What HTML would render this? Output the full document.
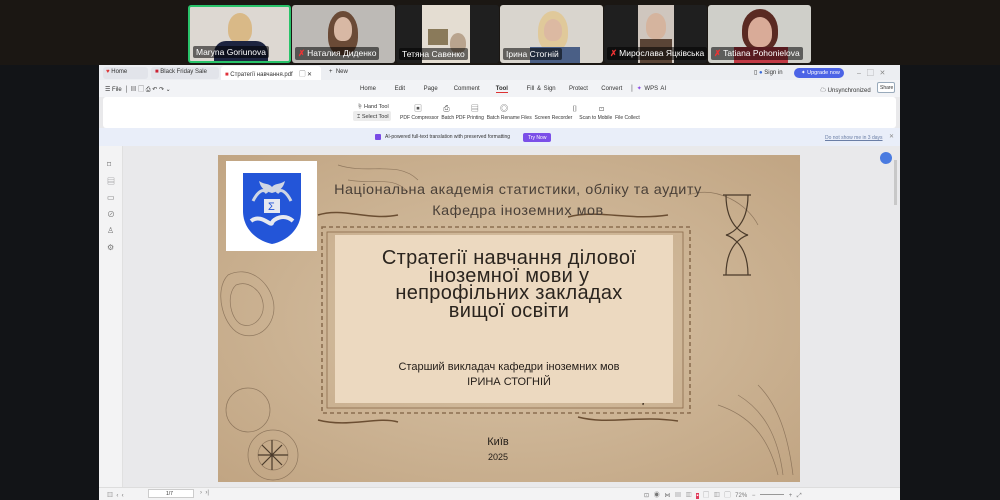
<!DOCTYPE html>
<html><head><meta charset="utf-8"><style>
*{margin:0;padding:0;box-sizing:border-box}
body{width:1000px;height:500px;overflow:hidden;background:#121417;font-family:"Liberation Sans","Noto Sans CJK SC",sans-serif;position:relative}
.top{position:absolute;left:0;top:0;width:1000px;height:65px;background:#1b1713}
.tile{position:absolute;top:5px;height:58px;width:103px;background:#2a2a2a;overflow:hidden;border-radius:3px}
.tile .lbl{position:absolute;left:3px;bottom:3px;background:rgba(0,0,0,.55);color:#fff;font-size:8.5px;padding:1px 3px;border-radius:2px;white-space:nowrap}
.mic{color:#e33;font-weight:bold;margin-right:2px}
.face{position:absolute;border-radius:50% 50% 40% 40%}
.win{position:absolute;left:99px;top:65px;width:801px;height:435px;background:#e9e9eb}
.abs{position:absolute}
.t{font-size:6px;color:#333;white-space:nowrap}
.slide{position:absolute;left:218px;top:155px;width:582px;height:327px;background:#cdb597;overflow:hidden}
.hd{font-family:"Liberation Sans",sans-serif;color:#4a4038;font-size:14px;letter-spacing:.5px;font-weight:300;transform:scaleX(1.03)}
</style></head><body>
<div class="top"></div>
<div class="tile" style="left:188px;background:#ddd8d2;border:2px solid #29c36a">
 <div class="face" style="left:38px;top:6px;width:24px;height:30px;background:#d9b987"></div>
 <div class="abs" style="left:24px;top:34px;width:54px;height:30px;background:#1d2440;border-radius:12px 12px 0 0"></div>
 <div class="lbl">Maryna Goriunova</div></div>
<div class="tile" style="left:292px;background:#bdbab6">
 <div class="face" style="left:36px;top:6px;width:30px;height:44px;background:#6a4a36"></div>
 <div class="face" style="left:42px;top:12px;width:18px;height:24px;background:#d8b8a4"></div>
 <div class="lbl"><span class="mic">✗</span>Наталия Диденко</div></div>
<div class="tile" style="left:396px;background:#1f1f1f">
 <div class="abs" style="left:26px;top:0;width:48px;height:58px;background:#e4ddd2"></div>
 <div class="abs" style="left:32px;top:24px;width:20px;height:16px;background:#8a7a5a"></div>
 <div class="face" style="left:54px;top:28px;width:16px;height:20px;background:#b9a48e"></div>
 <div class="lbl">Тетяна Савенко</div></div>
<div class="tile" style="left:500px;background:#d9d5ce">
 <div class="face" style="left:38px;top:6px;width:30px;height:40px;background:#e0c99a"></div>
 <div class="face" style="left:44px;top:14px;width:18px;height:22px;background:#dcb9a2"></div>
 <div class="abs" style="left:30px;top:42px;width:50px;height:20px;background:#4a5f86"></div>
 <div class="lbl">Ірина Стогній</div></div>
<div class="tile" style="left:604px;background:#1f1f1f">
 <div class="abs" style="left:34px;top:0;width:36px;height:58px;background:#cfc6be"></div>
 <div class="face" style="left:42px;top:8px;width:20px;height:26px;background:#d5b49e"></div>
 <div class="abs" style="left:36px;top:34px;width:32px;height:24px;background:#5a4436"></div>
 <div class="lbl"><span class="mic">✗</span>Мирослава Яцківська</div></div>
<div class="tile" style="left:708px;background:#cfcfc9">
 <div class="face" style="left:34px;top:4px;width:36px;height:42px;background:#5a2a22"></div>
 <div class="face" style="left:40px;top:12px;width:24px;height:30px;background:#d9ab98"></div>
 <div class="abs" style="left:26px;top:42px;width:54px;height:20px;background:#c23a45"></div>
 <div class="lbl"><span class="mic">✗</span>Tatiana Pohonielova</div></div>

<div class="win">
 <div class="abs" style="left:0;top:0;width:801px;height:15px;background:#eceef2"></div>
 <div class="abs" style="left:4px;top:2px;width:45px;height:12px;background:#e2e4ea;border-radius:3px"></div>
 <div class="abs t" style="left:7px;top:4px"><span style="color:#d33">♥</span> Home</div>
 <div class="abs" style="left:52px;top:2px;width:68px;height:12px;background:#e2e4ea;border-radius:3px"></div>
 <div class="abs t" style="left:56px;top:4px"><span style="color:#c23">■</span> Black Friday Sale</div>
 <div class="abs" style="left:122px;top:1px;width:100px;height:14px;background:#fff;border-radius:3px 3px 0 0"></div>
 <div class="abs t" style="left:126px;top:4px"><span style="color:#e0313a">■</span> Стратегії навчання.pdf &nbsp;&nbsp;&nbsp;▢ ✕</div>
 <div class="abs t" style="left:230px;top:4px">+ &nbsp;New</div>
 <div class="abs t" style="left:655px;top:4px">▯ <span style="color:#3a6ad8">●</span> Sign in</div>
 <div class="abs" style="left:695px;top:3px;width:50px;height:10px;background:#4b63e6;border-radius:5px"></div>
 <div class="abs t" style="left:702px;top:5px;color:#fff;font-size:5.5px">✦ Upgrade now</div>
 <div class="abs t" style="left:758px;top:3px;color:#888;font-size:7px">–&nbsp;&nbsp;&nbsp;▢&nbsp;&nbsp;&nbsp;✕</div>
 <div class="abs" style="left:0;top:15px;width:801px;height:17px;background:#f2f3f6"></div>
 <div class="abs t" style="left:6px;top:19px">☰ File &nbsp;│ ▤ ▢ ⎙ ↶ ↷ ⌄</div>
 <div class="abs t" style="left:261px;top:20px;word-spacing:1px">Home&nbsp;&nbsp;&nbsp;&nbsp;&nbsp;&nbsp;&nbsp;Edit&nbsp;&nbsp;&nbsp;&nbsp;&nbsp;&nbsp;&nbsp;Page&nbsp;&nbsp;&nbsp;&nbsp;&nbsp;&nbsp;Comment&nbsp;&nbsp;&nbsp;&nbsp;&nbsp;&nbsp;<b style="border-bottom:1px solid #d33">Tool</b>&nbsp;&nbsp;&nbsp;&nbsp;&nbsp;&nbsp;&nbsp;Fill &amp; Sign&nbsp;&nbsp;&nbsp;&nbsp;&nbsp;Protect&nbsp;&nbsp;&nbsp;&nbsp;&nbsp;Convert&nbsp;&nbsp;&nbsp;│&nbsp;<span style="color:#8a4be6">✦</span> WPS AI</div>
 <div class="abs t" style="left:721px;top:20px">☁ Unsynchronized</div>
 <div class="abs" style="left:778px;top:17px;width:18px;height:11px;border:1px solid #9ab;border-radius:2px;background:#fff"></div>
 <div class="abs t" style="left:781px;top:20px;font-size:5px">Share</div>
 <div class="abs" style="left:4px;top:32px;width:793px;height:31px;background:#fff;border-radius:3px"></div>
 <div class="abs t" style="left:258px;top:37px;font-size:5.5px">☝ Hand Tool</div>
 <div class="abs" style="left:254px;top:46px;width:38px;height:10px;background:#ececec;border-radius:2px"></div>
 <div class="abs t" style="left:258px;top:49px;font-size:5.5px">⌶ Select Tool</div>
 <div class="abs t" style="left:301px;top:50px;font-size:5px;word-spacing:0">PDF Compressor &nbsp;Batch PDF Printing &nbsp;Batch Rename Files &nbsp;Screen Recorder &nbsp;&nbsp;&nbsp;&nbsp;Scan to Mobile &nbsp;File Collect</div>
 <div class="abs t" style="left:315px;top:38px;font-size:8px;color:#555;word-spacing:19px">▣ ⎙ ▤ ◎ &nbsp; ▯ ⊡</div>
 <div class="abs" style="left:0;top:63px;width:801px;height:18px;background:#e9eef9"></div>
 <div class="abs" style="left:276px;top:69px;width:6px;height:6px;background:#7a4be6;border-radius:1px"></div>
 <div class="abs t" style="left:286px;top:69px;font-size:5px">AI-powered full-text translation with preserved formatting</div>
 <div class="abs" style="left:424px;top:68px;width:28px;height:9px;background:#7b4fe8;border-radius:2px"></div>
 <div class="abs t" style="left:429px;top:70px;font-size:5px;color:#fff">Try Now</div>
 <div class="abs t" style="left:726px;top:70px;font-size:5px;color:#6a7ea6;text-decoration:underline">Do not show me in 3 days</div>
 <div class="abs t" style="left:790px;top:68px;color:#888">✕</div>
 <div class="abs" style="left:0;top:81px;width:24px;height:342px;background:#f3f3f4;border-right:1px solid #e0e0e0"></div>
 <div class="abs" style="left:8px;top:92px;font-size:8px;color:#777;line-height:16.6px">⌑<br>▤<br>▭<br>⊘<br>♙<br>⚙</div>
 <div class="abs" style="left:781px;top:87px;width:12px;height:12px;background:#4a7be0;border-radius:50%"></div>
 <div class="abs" style="left:795px;top:95px;width:3px;height:45px;background:#c8c8c8"></div>
 <div class="abs" style="left:0;top:422px;width:801px;height:13px;background:#f3f3f4;border-top:1px solid #ddd"></div>
 <div class="abs t" style="left:8px;top:425px;color:#777">▥ &nbsp;‹ &nbsp;‹</div>
 <div class="abs" style="left:49px;top:424px;width:46px;height:9px;background:#fff;border:1px solid #ccc"></div>
 <div class="abs t" style="left:67px;top:426px;font-size:5px">1/7</div>
 <div class="abs t" style="left:101px;top:425px;color:#777">› &nbsp;›|</div>
 <div class="abs t" style="left:545px;top:425px;color:#777;word-spacing:3px">⊡ ◉ ⋈ ▤ ▥ <span style="background:#e03a5a;color:#fff">▪</span> ▢ ▥ ▢ 72% − ━━━━ + ⤢</div>
</div>

<div class="slide">
 <svg class="abs" style="left:0;top:0" width="582" height="327">
  <defs><radialGradient id="g" cx=".5" cy=".5" r=".7"><stop offset="0" stop-color="#d8c3a6"/><stop offset="1" stop-color="#c1a583"/></radialGradient></defs>
  <rect width="582" height="327" fill="url(#g)"/>
  <g fill="none" stroke="#6b5540" stroke-width=".7" opacity=".6">
   <path d="M10 120c20-10 40 5 45 25s-10 40-30 35-30-45-15-60z"/><path d="M18 130c12-5 25 5 27 18s-8 25-20 22-18-30-7-40z"/>
   <path d="M120 10c30 10 60-5 80 15"/><path d="M130 25c25 5 45-5 60 12"/><path d="M470 40c30-10 60 10 70 30"/>
   <path d="M500 250c30 10 50 30 60 70"/><path d="M520 240c25 15 40 40 45 80"/><path d="M540 230c20 20 30 50 35 90"/>
   <circle cx="30" cy="255" r="22"/><circle cx="55" cy="300" r="25"/><circle cx="55" cy="300" r="15"/>
  </g>
  <g stroke="#4a3a2a" fill="none" stroke-width="1.2">
   <path d="M505 40h28M505 120h28M508 40c0 35 22 40 22 40s-22 5-22 40M530 40c0 35-22 40-22 40s22 5 22 40"/>
   <path d="M425 250c10-40 20-90 25-130c-15 30-25 80-25 130z"/>
   <path d="M54 285l0 30M40 300h30M44 290l20 20M64 290l-20 20"/>
  </g>
  <rect x="104" y="72" width="368" height="186" fill="none" stroke="#7a5c3e" stroke-width="1.6" stroke-dasharray="4 3" opacity=".8"/>
  <rect x="109" y="77" width="356" height="176" fill="none" stroke="#8a6a4a" stroke-width=".8"/>
  <rect x="117" y="80" width="338" height="168" fill="#ecd9c0"/>
  <g fill="none" stroke="#6b4e32" stroke-width="1.5">
   <path d="M100 60c25-8 50 6 80 0M350 62c30-8 60 4 100-2M100 265c30 8 60-4 80 2M360 262c30 8 60-2 100 4"/>
  </g>
 </svg>
 <div class="abs" style="left:8px;top:6px;width:91px;height:90px;background:#fff"></div>
 <svg class="abs" style="left:23px;top:16px" width="62" height="74"><path d="M2 2h58v38c0 18-14 30-29 33C16 70 2 58 2 40z" fill="#2355d8"/><path d="M18 10c6 4 10 2 13 6 3-4 7-2 13-6-2 8-6 10-13 12-7-2-11-4-13-12z" fill="#cfd6e4"/><rect x="23" y="28" width="16" height="14" fill="#e6e9f0"/><text x="27" y="39" font-size="11" fill="#2355d8">Σ</text><path d="M10 50c10-8 20 6 21 2s12-10 21-2" stroke="#e6e9f0" stroke-width="4" fill="none"/><path d="M12 30c4-8 10-14 14-8M50 30c-4-8-10-14-14-8" stroke="#cfd6e4" stroke-width="3" fill="none"/></svg>
 <div class="abs hd" style="left:110px;top:26px;width:380px;text-align:center">Національна академія статистики, обліку та аудиту</div>
 <div class="abs hd" style="left:110px;top:47px;width:380px;text-align:center">Кафедра іноземних мов</div>
 <div class="abs" style="left:110px;top:95px;width:362px;text-align:center;font-size:20px;line-height:17.5px;color:#2a241e;letter-spacing:.3px">Стратегії навчання ділової<br>іноземної мови у<br>непрофільних закладах<br>вищої освіти</div>
 <div class="abs" style="left:110px;top:205px;width:362px;text-align:center;font-size:11px;line-height:15px;color:#231d18">Старший викладач кафедри іноземних мов<br>ІРИНА СТОГНІЙ</div>
 <div class="abs" style="left:230px;top:281px;width:100px;text-align:center;font-size:11px;color:#231d18">Київ</div>
 <div class="abs" style="left:230px;top:297px;width:100px;text-align:center;font-size:9px;color:#231d18">2025</div>
</div>
</body></html>
